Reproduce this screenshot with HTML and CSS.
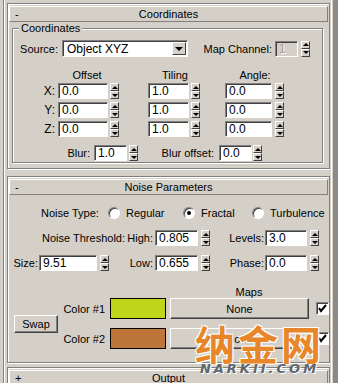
FILE: index.html
```html
<!DOCTYPE html>
<html lang="en">
<head>
    <meta charset="UTF-8">
    <title>Noise map parameters</title>
    <link rel="stylesheet" href="styles.css">
</head>
<body>
<div class="frame">
    <div class="rail"></div>
    <div class="rollouts">
        <section class="rollout coords">
            <div class="roll-head"><span class="toggle">-</span><span class="roll-title">Coordinates</span></div>
            <div class="group">
                <span class="group-title">Coordinates</span>
                <div class="row row-source">
                    <span class="lbl w-source">Source:</span>
                    <div class="combo"><span>Object XYZ</span><b class="combo-btn"></b></div>
                    <span class="lbl w-channel">Map Channel:</span>
                    <div class="field disabled w-chan">1</div>
                    <div class="spin ml3"><i class="up"></i><i class="down"></i></div>
                </div>
                <div class="row col-heads">
                    <span class="head-offset">Offset</span>
                    <span class="head-tiling">Tiling</span>
                    <span class="head-angle">Angle:</span>
                </div>
                <div class="row axis-row first">
                    <span class="lbl w-axis">X:</span>
                    <div class="field w-offset">0.0</div>
                    <div class="spin ml2"><i class="up"></i><i class="down"></i></div>
                    <div class="field w-tiling">1.0</div>
                    <div class="spin ml2"><i class="up"></i><i class="down"></i></div>
                    <div class="field w-angle">0.0</div>
                    <div class="spin ml3"><i class="up"></i><i class="down"></i></div>
                </div>
                <div class="row axis-row">
                    <span class="lbl w-axis">Y:</span>
                    <div class="field w-offset">0.0</div>
                    <div class="spin ml2"><i class="up"></i><i class="down"></i></div>
                    <div class="field w-tiling">1.0</div>
                    <div class="spin ml2"><i class="up"></i><i class="down"></i></div>
                    <div class="field w-angle">0.0</div>
                    <div class="spin ml3"><i class="up"></i><i class="down"></i></div>
                </div>
                <div class="row axis-row">
                    <span class="lbl w-axis">Z:</span>
                    <div class="field w-offset">0.0</div>
                    <div class="spin ml2"><i class="up"></i><i class="down"></i></div>
                    <div class="field w-tiling">1.0</div>
                    <div class="spin ml2"><i class="up"></i><i class="down"></i></div>
                    <div class="field w-angle">0.0</div>
                    <div class="spin ml3"><i class="up"></i><i class="down"></i></div>
                </div>
                <div class="row blur-row">
                    <span class="lbl w-blur">Blur:</span>
                    <div class="field w-blurval">1.0</div>
                    <div class="spin ml2"><i class="up"></i><i class="down"></i></div>
                    <span class="lbl w-bluroff">Blur offset:</span>
                    <div class="field w-bluroffval">0.0</div>
                    <div class="spin ml1"><i class="up"></i><i class="down"></i></div>
                </div>
            </div>
        </section>

        <section class="rollout noise">
            <div class="roll-head"><span class="toggle">-</span><span class="roll-title">Noise Parameters</span></div>
            <div class="row noise-type">
                <span class="w-ntype">Noise Type:</span>
                <label class="opt opt-regular"><span class="radio"></span>Regular</label>
                <label class="opt opt-fractal"><span class="radio on"></span>Fractal</label>
                <label class="opt"><span class="radio"></span>Turbulence</label>
            </div>
            <div class="row param-row">
                <span class="lbl w-thresh">Noise Threshold:</span>
                <span class="lbl w-high">High:</span>
                <div class="field w-mid">0.805</div>
                <div class="spin ml3"><i class="up"></i><i class="down"></i></div>
                <span class="lbl w-right">Levels:</span>
                <div class="field w-end">3.0</div>
                <div class="spin ml3"><i class="up"></i><i class="down"></i></div>
            </div>
            <div class="row param-row">
                <span class="lbl w-size">Size:</span>
                <div class="field w-sizeval">9.51</div>
                <div class="spin ml3"><i class="up"></i><i class="down"></i></div>
                <span class="lbl w-low">Low:</span>
                <div class="field w-mid">0.655</div>
                <div class="spin ml3"><i class="up"></i><i class="down"></i></div>
                <span class="lbl w-right">Phase:</span>
                <div class="field w-end">0.0</div>
                <div class="spin ml3"><i class="up"></i><i class="down"></i></div>
            </div>
            <div class="maps-label">Maps</div>
            <div class="maps">
                <button class="btn swap">Swap</button>
                <div class="color-rows">
                    <div class="row color-row">
                        <span class="lbl w-color">Color #1</span>
                        <span class="swatch green"></span>
                        <button class="btn map-btn">None</button>
                        <span class="check"><svg width="11" height="11" viewBox="0 0 11 11"><polyline points="2,5 4,8 9,2" fill="none" stroke="#000" stroke-width="2"/></svg></span>
                    </div>
                    <div class="row color-row">
                        <span class="lbl w-color">Color #2</span>
                        <span class="swatch brown"></span>
                        <button class="btn map-btn">None</button>
                        <span class="check"><svg width="11" height="11" viewBox="0 0 11 11"><polyline points="2,5 4,8 9,2" fill="none" stroke="#000" stroke-width="2"/></svg></span>
                    </div>
                </div>
            </div>
        </section>

        <section class="rollout output">
            <div class="roll-head"><span class="toggle">+</span><span class="roll-title">Output</span></div>
        </section>
    </div>
    <div class="edge"></div>
</div>

<div class="watermark">
    <span class="wm-cn">纳金网</span>
    <span class="wm-en">NARKII.COM</span>
</div>
</body>
</html>
```

FILE: styles.css
```css
* {
    margin: 0;
    padding: 0;
    box-sizing: border-box;
}
html, body {
    width: 338px;
    height: 383px;
    overflow: hidden;
}
body {
    position: relative;
    background: #d4d0c8;
    font-family: "Liberation Sans", Arial, sans-serif;
    font-size: 11px;
    color: #000;
}
.frame {
    display: flex;
    height: 383px;
    overflow: hidden;
}
.rail {
    width: 7px;
    flex: none;
    background: linear-gradient(to right, transparent 3px, #808080 3px, #808080 4px, #fff 4px, #fff 5px, transparent 5px);
}
.rollouts {
    width: 323px;
    flex: none;
}
.edge {
    flex: 1;
    background: linear-gradient(to right, #d4d0c8 1px, #fff 1px, #fff 2px, #d4d0c8 2px, #d4d0c8 3px, #8d8a85 3px);
}

/* rollouts */
.rollout {
    border: 1px solid #808080;
    box-shadow: inset 1px 1px 0 #fff, 1px 1px 0 #fff;
    padding: 2px 1px 0 1px;
}
.coords {
    margin-top: 3px;
    height: 166px;
}
.noise {
    margin-top: 7px;
    height: 187px;
}
.output {
    margin-top: 4px;
    height: 16px;
    border-bottom: none;
    overflow: hidden;
}
.roll-head {
    display: grid;
    align-items: center;
    height: 16px;
    background: #d4d0c8;
    border: 1px solid;
    border-color: #fff #808080 #808080 #fff;
}
.roll-head span {
    grid-area: 1 / 1;
    line-height: 13px;
}
.toggle {
    justify-self: start;
    margin-left: 5px;
}
.roll-title {
    justify-self: center;
}

/* group box */
.group {
    margin: 6px 5px 0 3px;
    height: 135px;
    border: 1px solid #808080;
    box-shadow: inset 1px 1px 0 #fff, 1px 1px 0 #fff;
}
.group-title {
    display: block;
    width: fit-content;
    height: 13px;
    line-height: 13px;
    margin: -7px 0 0 6px;
    padding: 0 2px;
    background: #d4d0c8;
}

/* rows */
.row {
    display: flex;
    align-items: center;
}
.lbl {
    flex: none;
    text-align: right;
    white-space: nowrap;
}
.ml1 { margin-left: 1px; }
.ml2 { margin-left: 2px; }
.ml3 { margin-left: 3px; }

.row-source {
    margin-top: 5px;
    height: 17px;
}
.w-source { width: 45px; }
.w-channel { width: 84px; }
.combo {
    display: flex;
    align-items: center;
    justify-content: space-between;
    margin-left: 4px;
    width: 126px;
    height: 17px;
    padding: 0 1px 0 4px;
    background: #fff;
    border: 1px solid;
    border-color: #808080 #fff #fff #808080;
    box-shadow: inset 1px 1px 0 #404040;
    font-size: 12px;
}
.combo-btn {
    display: flex;
    align-items: center;
    justify-content: center;
    width: 14px;
    height: 13px;
    background: #d4d0c8;
    border: 1px solid;
    border-color: #fff #404040 #404040 #fff;
}
.combo-btn::after {
    content: "";
    border-left: 4px solid transparent;
    border-right: 4px solid transparent;
    border-top: 4px solid #000;
}

.field {
    flex: none;
    height: 16px;
    line-height: 14px;
    padding-left: 3px;
    background: #fff;
    border: 1px solid;
    border-color: #808080 #fff #fff #808080;
    box-shadow: inset 1px 1px 0 #404040;
    font-size: 12px;
    white-space: nowrap;
    overflow: hidden;
}
.field.disabled {
    background: #d4d0c8;
    color: #a09c94;
    text-shadow: 1px 1px 0 #fff;
}
.w-chan {
    width: 23px;
    margin-left: 3px;
}

.spin {
    flex: none;
    display: flex;
    flex-direction: column;
    width: 9px;
    height: 16px;
}
.spin i {
    flex: 1;
    display: flex;
    align-items: center;
    justify-content: center;
    background: #d4d0c8;
    border: 1px solid;
    border-color: #fff #404040 #404040 #fff;
}
.spin i::after {
    content: "";
    border-left: 3px solid transparent;
    border-right: 3px solid transparent;
}
.spin .up::after {
    border-bottom: 3px solid #000;
}
.spin .down::after {
    border-top: 3px solid #000;
}

.col-heads {
    margin-top: 11px;
    height: 13px;
}
.col-heads span {
    width: 60px;
    text-align: center;
}
.head-offset { margin-left: 44px; }
.head-tiling { margin-left: 28px; }
.head-angle { margin-left: 20px; }

.axis-row {
    margin-top: 3px;
    height: 16px;
}
.axis-row.first {
    margin-top: 2px;
}
.axis-row .lbl {
    font-size: 12px;
}
.w-axis { width: 42px; }
.w-offset {
    margin-left: 3px;
    width: 50px;
}
.w-tiling {
    margin-left: 29px;
    width: 41px;
}
.w-angle {
    margin-left: 25px;
    width: 47px;
}

.blur-row {
    margin-top: 8px;
    height: 16px;
}
.w-blur { width: 77px; }
.w-blurval {
    margin-left: 4px;
    width: 33px;
}
.w-bluroff { width: 76px; }
.w-bluroffval {
    margin-left: 5px;
    width: 33px;
}

/* noise parameters */
.noise-type {
    margin-top: 10px;
    height: 16px;
}
.w-ntype {
    margin-left: 32px;
    width: 67px;
}
.opt {
    display: flex;
    align-items: center;
    gap: 6px;
}
.opt-regular { width: 75px; }
.opt-fractal { width: 69px; }
.radio {
    display: flex;
    align-items: center;
    justify-content: center;
    width: 12px;
    height: 12px;
    border-radius: 50%;
    background: #fff;
    border: 1px solid;
    border-color: #808080 #fff #fff #808080;
    box-shadow: inset 1px 1px 0 #404040;
}
.radio.on::after {
    content: "";
    width: 4px;
    height: 4px;
    border-radius: 50%;
    background: #000;
}

.param-row {
    margin-top: 9px;
    height: 16px;
}
.w-thresh { width: 116px; }
.w-high { width: 28px; }
.w-mid {
    margin-left: 2px;
    width: 43px;
}
.w-right { width: 54px; }
.w-end {
    margin-left: 1px;
    width: 42px;
}
.w-size { width: 29px; }
.w-sizeval {
    margin-left: 1px;
    width: 58px;
}
.w-low { width: 44px; }

/* maps */
.maps-label {
    margin: 15px 0 0 161px;
    width: 158px;
    height: 12px;
    line-height: 12px;
    text-align: center;
}
.maps {
    display: flex;
    align-items: center;
}
.btn {
    display: block;
    background: #d4d0c8;
    border: 1px solid;
    border-color: #fff #404040 #404040 #fff;
    box-shadow: inset -1px -1px 0 #808080;
    font-family: inherit;
    font-size: 11px;
    color: #000;
    text-align: center;
}
.swap {
    flex: none;
    margin-left: 5px;
    width: 44px;
    height: 18px;
}
.color-rows {
    display: flex;
    flex-direction: column;
    gap: 9px;
}
.color-row {
    height: 21px;
}
.w-color { width: 47px; }
.swatch {
    flex: none;
    margin-left: 5px;
    width: 56px;
    height: 21px;
    border: 1px solid #000;
}
.green { background: #bed51c; }
.brown { background: #be7539; }
.map-btn {
    flex: none;
    margin-left: 4px;
    width: 139px;
    height: 21px;
}
.check {
    flex: none;
    display: flex;
    align-items: center;
    justify-content: center;
    margin-left: 7px;
    width: 13px;
    height: 13px;
    background: #fff;
    border: 1px solid;
    border-color: #808080 #fff #fff #808080;
    box-shadow: inset 1px 1px 0 #404040;
}

/* watermark over the bottom right */
.watermark {
    position: absolute;
    left: 195px;
    top: 321px;
    display: flex;
    flex-direction: column;
    align-items: center;
    pointer-events: none;
}
.wm-cn {
    font-family: "Noto Sans CJK SC", sans-serif;
    font-weight: bold;
    font-size: 40px;
    line-height: 44px;
    color: #e8862a;
    letter-spacing: 3px;
    text-shadow: 1px 1px 0 #fff, -1px -1px 0 #fff, 1px -1px 0 #fff, -1px 1px 0 #fff;
}
.wm-en {
    margin-top: -3px;
    font-family: "DejaVu Sans", sans-serif;
    font-weight: bold;
    font-style: italic;
    font-size: 13px;
    line-height: 13px;
    letter-spacing: 3px;
    color: #5e6670;
    text-shadow: 1px 1px 0 #fff;
}
```
